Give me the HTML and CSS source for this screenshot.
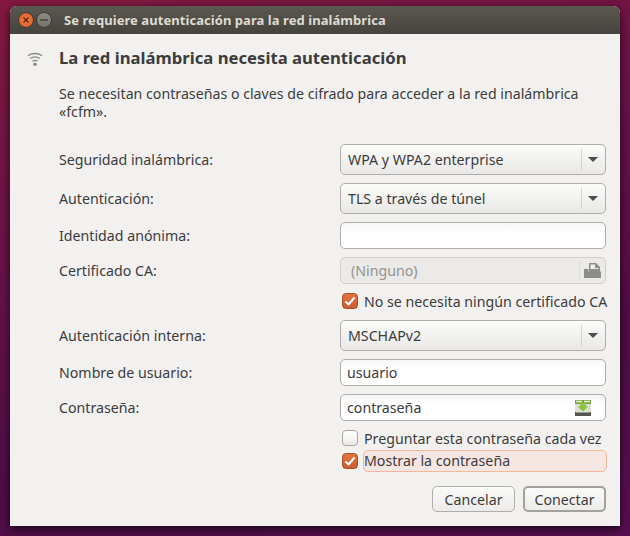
FILE: index.html
```html
<!DOCTYPE html>
<html lang="es">
<head>
    <meta charset="UTF-8">
    <title>Se requiere autenticación para la red inalámbrica</title>
    <link rel="stylesheet" href="styles.css">
</head>
<body>
    <div class="window">
        <div class="titlebar">
            <span class="win-btn win-close">
                <svg width="8" height="8" viewBox="0 0 8 8"><path d="M1.5 1.5l5 5M6.500 1.500l-5 5" stroke="#4a2412" stroke-width="1.200" fill="none"/></svg>
            </span>
            <span class="win-btn win-min">
                <svg width="10" height="8" viewBox="0 0 10 8"><path d="M1 4h8" stroke="#3a3a36" stroke-width="1.300" fill="none"/></svg>
            </span>
            <span class="win-title">Se requiere autenticación para la red inalámbrica</span>
        </div>
        <div class="content">
            <div class="heading-row">
                <svg class="wifi-icon" width="16" height="16" viewBox="0 0 16 16">
                    <g fill="none" stroke="#8a8a86" stroke-width="1.300">
                        <path d="M1 4.800c4-3.100 10-3.100 14 0"/>
                        <path d="M3.200 7.600c2.800-2.100 6.800-2.100 9.600 0"/>
                        <path d="M5.400 10.300c1.500-1.100 3.700-1.100 5.200 0"/>
                    </g>
                    <circle cx="8" cy="13.300" r="1.700" fill="#8a8a86"/>
                </svg>
                <h1>La red inalámbrica necesita autenticación</h1>
            </div>
            <p class="intro">Se necesitan contraseñas o claves de cifrado para acceder a la red inalámbrica «fcfm».</p>

            <div class="form">
                <label>Seguridad inalámbrica:</label>
                <div class="combo"><span class="combo-text">WPA y WPA2 enterprise</span><span class="combo-arrow"></span></div>

                <label>Autenticación:</label>
                <div class="combo"><span class="combo-text">TLS a través de túnel</span><span class="combo-arrow"></span></div>

                <label>Identidad anónima:</label>
                <div class="entry"></div>

                <label>Certificado CA:</label>
                <div class="entry entry-disabled">
                    <span>(Ninguno)</span>
                    <span class="file-btn">
                        <svg width="17" height="15" viewBox="0 0 17 15">
                            <path d="M5 7V0h7l4 4v5H5z" fill="#8c8c88"/>
                            <path d="M6.500 6V1.500h4.500v3.500h3.500v1z" fill="#efeeec"/>
                            <path d="M0 15V6h4.500v2.500H17V15z" fill="#8c8c88"/>
                        </svg>
                    </span>
                </div>

                <div class="check-row check-row-ca">
                    <span class="check check-on"><svg width="12" height="11" viewBox="0 0 12 11"><path d="M1.500 5.500l3 3 6-7" stroke="#fff" stroke-width="2.200" fill="none"/></svg></span>
                    <span>No se necesita ningún certificado CA</span>
                </div>

                <label>Autenticación interna:</label>
                <div class="combo"><span class="combo-text">MSCHAPv2</span><span class="combo-arrow"></span></div>

                <label>Nombre de usuario:</label>
                <div class="entry">usuario</div>

                <label>Contraseña:</label>
                <div class="entry">
                    <span>contraseña</span>
                    <svg class="key-icon" width="16" height="16" viewBox="0 0 16 16">
                        <rect x="0" y="0" width="16" height="16" fill="#dcdfd4"/>
                        <rect x="0" y="0" width="16" height="4" fill="#7d9f3c"/>
                        <path d="M1 1.500h6M9 1.500h6" stroke="#e8f2d4" stroke-width="1.500"/>
                        <path d="M5 3h6v3.500h2.500L8 11.500 2.500 6.500H5z" fill="#8cc63f"/>
                        <rect x="0" y="12" width="16" height="4" fill="#55554f"/>
                        <rect x="1" y="12" width="14" height="1" fill="#9a9a94"/>
                    </svg>
                </div>

                <div class="check-row check-row-ask">
                    <span class="check"></span>
                    <span>Preguntar esta contraseña cada vez</span>
                </div>
                <div class="check-row check-row-show">
                    <span class="check check-on"><svg width="12" height="11" viewBox="0 0 12 11"><path d="M1.500 5.500l3 3 6-7" stroke="#fff" stroke-width="2.200" fill="none"/></svg></span>
                    <span class="focus-label">Mostrar la contraseña</span>
                </div>
            </div>

            <div class="actions">
                <button class="btn">Cancelar</button>
                <button class="btn btn-default">Conectar</button>
            </div>
        </div>
    </div>
</body>
</html>
```

FILE: styles.css
```css
* {
    margin: 0;
    padding: 0;
    box-sizing: border-box;
}
html, body {
    height: 536px;
    overflow: hidden;
}
body {
    font-family: "Noto Sans", sans-serif;
    font-size: 14.2px;
    color: #3c3c3c;
    background: linear-gradient(165deg, #83193f 0%, #6a1348 35%, #4f0d46 70%, #560f50 100%);
    padding: 6px 10px 0;
}
.window {
    height: 520px;
    border-radius: 7px 7px 0 0;
    background: #f2f1f0;
    box-shadow: 0 3px 10px rgba(0,0,0,0.7);
}
.titlebar {
    height: 28px;
    display: flex;
    align-items: center;
    padding-left: 8px;
    border-radius: 7px 7px 0 0;
    background: linear-gradient(#5a5850, #45433d);
}
.win-btn {
    width: 16px;
    height: 16px;
    border-radius: 50%;
    display: flex;
    align-items: center;
    justify-content: center;
}
.win-close {
    background: radial-gradient(#f4803f, #d8542a);
    border: 1px solid #3e3b36;
}
.win-min {
    margin-left: 2px;
    background: linear-gradient(#8e8c84, #74726a);
    border: 1px solid #3e3b36;
}
.win-title {
    margin-left: 12px;
    font-size: 13px;
    font-weight: 700;
    letter-spacing: 0.06px;
    color: #dfdbd2;
}
.content {
    padding: 0 14px 0 17px;
}
.heading-row {
    display: flex;
    align-items: center;
    height: 47px;
}
.wifi-icon {
    flex: none;
    margin-top: 3px;
}
.heading-row h1 {
    margin-left: 16px;
    font-size: 16.7px;
    font-weight: 700;
    color: #3c3c3c;
}
.intro {
    margin: 4px 0 0 32px;
    width: 540px;
    line-height: 18px;
}
.form {
    margin: 23px 0 0 32px;
    display: grid;
    grid-template-columns: 281px 266px;
    row-gap: 8px;
    align-items: center;
}
.combo {
    grid-column: 2;
    height: 31px;
    display: flex;
    align-items: center;
    border: 1px solid #b0aeaa;
    border-radius: 5px;
    background: linear-gradient(#fbfbfa, #e9e8e6);
}
.combo-text {
    flex: 1;
    padding-left: 7px;
}
.combo-arrow {
    width: 24px;
    height: 21px;
    border-left: 1px solid #d4d3d0;
    position: relative;
}
.combo-arrow::after {
    content: "";
    position: absolute;
    left: 6px;
    top: 8px;
    border-left: 5px solid transparent;
    border-right: 5px solid transparent;
    border-top: 5px solid #4c4c4c;
}
.entry {
    grid-column: 2;
    height: 27px;
    display: flex;
    align-items: center;
    justify-content: space-between;
    padding: 0 6px;
    border: 1px solid #b0aeaa;
    border-radius: 5px;
    background: linear-gradient(#f6f6f6, #ffffff 40%);
}
.entry-disabled {
    padding: 0 4px 0 10px;
    color: #92918e;
    background: #ebeae8;
    border-color: #d0cfcc;
}
.file-btn {
    height: 19px;
    padding-left: 4px;
    border-left: 1px solid #dcdbd8;
    display: flex;
    align-items: center;
}
.key-icon {
    margin-right: 8px;
}
.check-row {
    grid-column: 2;
    display: flex;
    align-items: center;
    height: 22px;
    padding-left: 2px;
    white-space: nowrap;
}
.check-row-ca {
    margin: -2px 0 0;
}
.check-row-ask {
    margin-top: -2px;
}
.check-row-show {
    margin-top: -7px;
}
.check {
    flex: none;
    width: 16px;
    height: 16px;
    margin-right: 6px;
    border: 1px solid #a8a6a2;
    border-radius: 4px;
    background: linear-gradient(#ffffff, #ecebe9);
    display: flex;
    align-items: center;
    justify-content: center;
}
.check-on {
    border-color: #a5502c;
    background: linear-gradient(#e4753f, #cc5a2c);
}
.focus-label {
    flex: 1;
    height: 22px;
    line-height: 20px;
    margin: 0 -1px;
    border: 1px solid #f4b79b;
    border-radius: 5px;
    background: #f5e6e1;
}
.actions {
    margin: 14px 0 0;
    display: flex;
    justify-content: flex-end;
    gap: 8px;
}
.btn {
    width: 83px;
    height: 26px;
    font-family: inherit;
    font-size: 14.2px;
    color: #3c3c3c;
    border: 1px solid #b0aeaa;
    border-radius: 5px;
    background: linear-gradient(#fbfbfa, #ecebe9);
}
.btn-default {
    border: 2px solid #a3a19d;
}
```
